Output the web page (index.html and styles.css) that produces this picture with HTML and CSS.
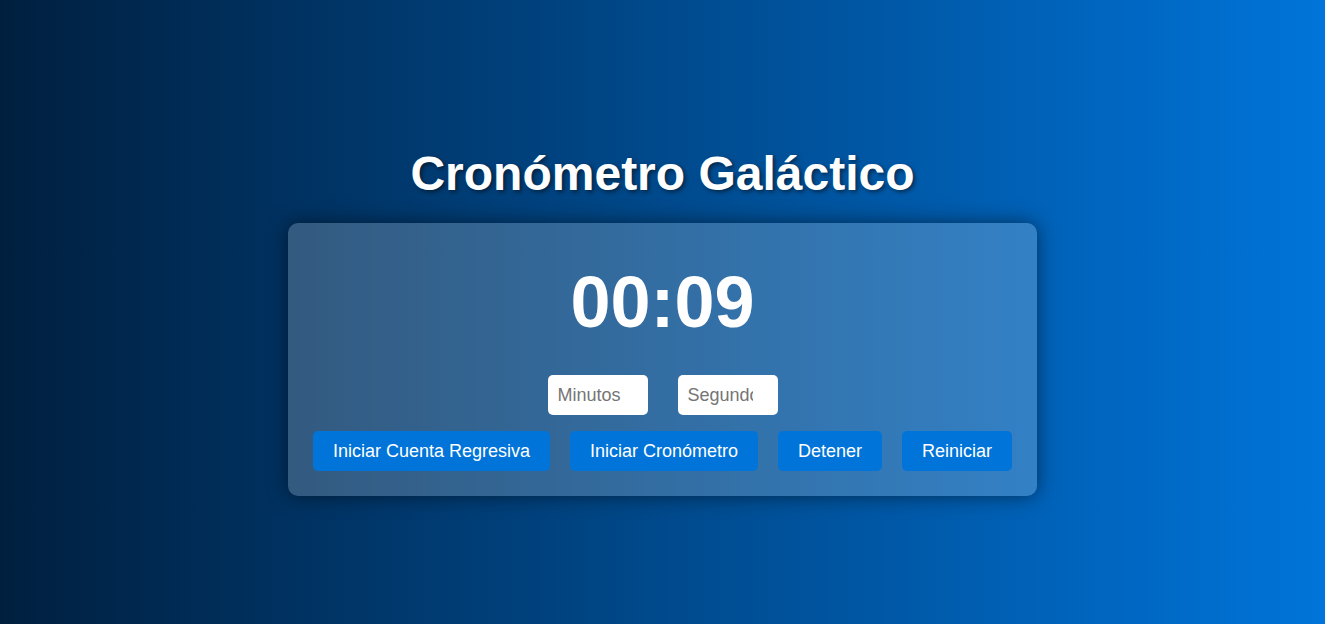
FILE: index.html
```html
<!DOCTYPE html>
<html lang="es">
<head>
<meta charset="utf-8">
<title>Cronómetro Galáctico</title>
<link rel="stylesheet" href="styles.css">
</head>
<body>
  <main class="page">
    <h1 class="title">Cronómetro Galáctico</h1>
    <section class="card">
      <div class="timer">00:09</div>
      <div class="inputs">
        <input class="field" type="number" placeholder="Minutos">
        <input class="field" type="number" placeholder="Segundos">
      </div>
      <div class="buttons">
        <button class="btn">Iniciar Cuenta Regresiva</button>
        <button class="btn">Iniciar Cronómetro</button>
        <button class="btn">Detener</button>
        <button class="btn">Reiniciar</button>
      </div>
    </section>
  </main>
</body>
</html>
```

FILE: styles.css
```css
html, body {
  margin: 0;
  padding: 0;
  height: 100%;
}

body {
  font-family: "Liberation Sans", Arial, sans-serif;
  background: linear-gradient(to right, #001f3f, #0074d9);
  color: #fff;
}

.page {
  height: 100%;
  display: flex;
  flex-direction: column;
  align-items: center;
  justify-content: center;
  box-sizing: border-box;
  padding-top: 18px;
}

.title {
  margin: 0 0 22px;
  font-size: 48px;
  font-weight: bold;
  line-height: 55px;
  text-shadow: 2px 2px 4px rgba(0, 0, 0, 0.5);
}

.card {
  background: rgba(255, 255, 255, 0.2);
  border-radius: 10px;
  box-shadow: 0 0 20px rgba(0, 0, 0, 0.5);
  padding: 38px 25px 25px;
  display: flex;
  flex-direction: column;
  align-items: center;
}

.timer {
  font-size: 72px;
  font-weight: bold;
  line-height: 83px;
  margin-bottom: 31px;
}

.inputs {
  display: flex;
  gap: 30px;
  margin-bottom: 16px;
}

.field {
  box-sizing: border-box;
  width: 100px;
  height: 40px;
  padding: 10px;
  border: none;
  border-radius: 5px;
  font-family: "Liberation Sans", Arial, sans-serif;
  font-size: 18px;
  background: #fff;
  color: #333;
}

.field::placeholder {
  color: #757575;
}

.buttons {
  display: flex;
  gap: 20px;
}

.btn {
  height: 40px;
  padding: 0 20px;
  border: none;
  border-radius: 5px;
  background: #0074d9;
  color: #fff;
  font-family: "Liberation Sans", Arial, sans-serif;
  font-size: 18px;
  cursor: pointer;
}
```
